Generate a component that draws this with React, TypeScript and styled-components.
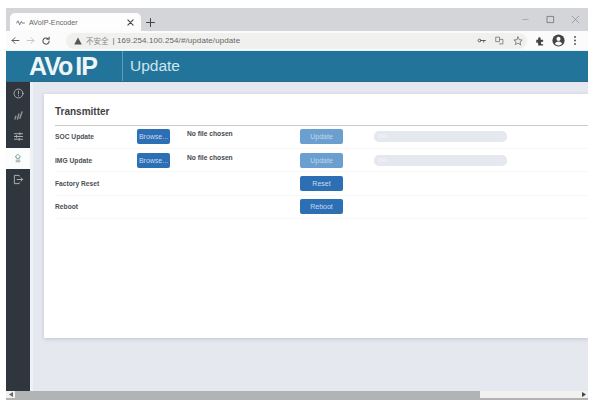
import * as React from "react";
import styled, { createGlobalStyle } from "styled-components";

const Global = createGlobalStyle`
  html, body {
    margin: 0;
    padding: 0;
    background: #fff;
    font-family: "Liberation Sans", Arial, sans-serif;
  }
  body { overflow: hidden; }
`;

const Page = styled.div`
  width: 602px;
  height: 402px;
  padding: 8px 14px 2px 6px;
  box-sizing: border-box;
`;

const Win = styled.div`
  width: 582px;
  height: 392px;
  display: flex;
  flex-direction: column;
  overflow: hidden;
`;

const TabStrip = styled.div`
  height: 23px;
  flex: none;
  background: #d3d5d9;
  display: flex;
  align-items: flex-end;
  padding-left: 4px;
`;

const Tab = styled.div`
  width: 131px;
  height: 18px;
  background: #fdfdfd;
  border-radius: 5px 5px 0 0;
  display: flex;
  align-items: center;
  padding: 0 7px 0 6px;
  box-sizing: border-box;
  font-size: 7.2px;
  color: #666;
  gap: 4px;
`;

const TabTitle = styled.span`
  flex: 1;
`;

const NewTab = styled.div`
  margin-left: 5px;
  height: 18px;
  display: flex;
  align-items: center;
`;

const WinControls = styled.div`
  margin-left: auto;
  height: 23px;
  display: flex;
  align-items: center;
  gap: 16px;
  padding-right: 8px;
`;

const AddressBar = styled.div`
  height: 20px;
  flex: none;
  background: #fbfbfb;
  display: flex;
  align-items: center;
  padding-left: 5px;
  border-bottom: 1px solid #e4f2f6;
  box-sizing: border-box;
`;

const NavIcons = styled.div`
  display: flex;
  align-items: center;
  gap: 6px;
  width: 55px;
  flex: none;
`;

const Omnibox = styled.div`
  width: 461px;
  flex: none;
  height: 16px;
  background: #f0f0ee;
  border-radius: 8px;
  display: flex;
  align-items: center;
  box-sizing: border-box;
  padding: 0 0 0 8px;
  font-size: 8px;
  color: #666;
  gap: 4px;
  margin-right: 8px;
`;

const Insecure = styled.span`
  font-family: "Noto Sans CJK SC", "Liberation Sans", sans-serif;
  font-size: 7.5px;
  color: #888;
`;

const Url = styled.span`
  letter-spacing: 0.1px;
  color: #666;
`;

const OmniRight = styled.div`
  margin-left: auto;
  display: flex;
  align-items: center;
  gap: 9px;
  padding-right: 4px;
`;

const ChromeRight = styled.div`
  display: flex;
  align-items: center;
  gap: 7px;
`;

const Header = styled.header`
  height: 31px;
  flex: none;
  background: #23749a;
  border-bottom: 1px solid #2a6a84;
  box-sizing: border-box;
  display: flex;
  align-items: center;
`;

const Logo = styled.div`
  width: 117px;
  height: 100%;
  box-sizing: border-box;
  padding-left: 23px;
  display: flex;
  align-items: center;
  font-size: 25px;
  font-weight: bold;
  letter-spacing: -1px;
  color: #eef6f8;
  border-right: 1px solid #5e9cb8;
`;

const LogoTail = styled.span`
  margin-left: 3px;
`;

const PageTitle = styled.div`
  padding-left: 7px;
  font-size: 15.5px;
  color: #cfe6ee;
`;

const Body = styled.div`
  flex: 1;
  min-height: 0;
  display: flex;
  background: #e6e8f0;
`;

const Sidebar = styled.nav`
  width: 24px;
  flex: none;
  background: #2f363d;
  display: flex;
  flex-direction: column;
`;

const SideItem = styled.div<{ $active?: boolean }>`
  height: 21.5px;
  display: flex;
  align-items: center;
  justify-content: center;
  background: ${(p) => (p.$active ? "#fbfdfc" : "transparent")};
`;

const SideTop = styled.div`
  height: 1px;
`;

const Main = styled.main`
  flex: 1;
  min-width: 0;
  padding: 12px 0 0 11px;
  border-left: 3px solid #eef1f7;
`;

const Card = styled.section`
  background: #fff;
  height: 244px;
  box-shadow: 0 1px 4px rgba(120, 125, 140, 0.35);
  padding: 0 0 0 11px;
  box-sizing: border-box;
`;

const CardTitle = styled.h2`
  margin: 0;
  height: 31.5px;
  line-height: 35px;
  box-sizing: border-box;
  font-size: 10px;
  font-weight: bold;
  color: #3f4247;
  border-bottom: 1px solid #c9c9c9;
`;

const Row = styled.div`
  height: 23.4px;
  display: grid;
  grid-template-columns: 82px 50px 113px 74px 133px;
  align-items: center;
  border-bottom: 1px solid #f7f7f7;
  box-sizing: border-box;
`;

const Label = styled.span`
  font-size: 6.7px;
  font-weight: bold;
  color: #4c4f54;
`;

const FileName = styled.span`
  font-size: 6.7px;
  font-weight: bold;
  color: #45484d;
  margin-top: -6px;
`;

const Btn = styled.button<{ $w: number; $disabled?: boolean }>`
  width: ${(p) => p.$w}px;
  height: 15px;
  padding: 0;
  border: 0;
  border-radius: 2px;
  background: ${(p) => (p.$disabled ? "#6a9fd0" : "#2c6fb5")};
  color: ${(p) => (p.$disabled ? "#c4d9ec" : "#c8daec")};
  font-family: "Liberation Sans", Arial, sans-serif;
  font-size: 7px;
  text-align: center;
`;

const Progress = styled.div`
  width: 133px;
  height: 11px;
  border-radius: 5px;
  background: #e6e8ef;
  font-size: 6px;
  line-height: 11px;
  padding-left: 4px;
  box-sizing: border-box;
  color: #f5f6f8;
`;

const Scrollbar = styled.div`
  height: 9px;
  flex: none;
  background: #f1f1ef;
  border-bottom: 2px solid #b2b3b5;
  box-sizing: border-box;
  display: flex;
  align-items: stretch;
`;

const ScrollArrow = styled.div`
  width: 9px;
  display: flex;
  justify-content: center;
  align-items: center;
  flex: none;
`;

const Thumb = styled.div`
  width: 465px;
  margin-bottom: -2px;
  background: #b2b3b5;
`;

const ArrowEnd = styled(ScrollArrow)`
  margin-left: auto;
  margin-right: 0;
`;

const Ico = ({ children, size = 10, color = "#555", sw = 1.5 }: any) => (
  <svg width={size} height={size} viewBox="0 0 16 16" fill="none" stroke={color} strokeWidth={sw} strokeLinecap="round" strokeLinejoin="round">
    {children}
  </svg>
);

const rows = [
  { label: "SOC Update", file: true },
  { label: "IMG Update", file: true },
  { label: "Factory Reset", action: "Reset" },
  { label: "Reboot", action: "Reboot" },
];

export default function App() {
  return (
    <Page>
      <Global />
      <Win>
        <TabStrip>
          <Tab>
            <Ico size={9} color="#667">
              <path d="M1 9l2.500-4 3 7 3-6 1.500 3H15" />
            </Ico>
            <TabTitle>AVoIP-Encoder</TabTitle>
            <Ico size={7} color="#444" sw={2.4}>
              <path d="M2 2l12 12M14 2L2 14" />
            </Ico>
          </Tab>
          <NewTab>
            <Ico size={9} color="#444" sw={1.8}>
              <path d="M8 1v14M1 8h14" />
            </Ico>
          </NewTab>
          <WinControls>
            <Ico size={9} color="#999" sw={1.2}>
              <path d="M3 8h10" />
            </Ico>
            <Ico size={9} color="#666" sw={1.3}>
              <rect x="2.500" y="2.500" width="11" height="11" />
            </Ico>
            <Ico size={9} color="#888" sw={1.2}>
              <path d="M2 2l12 12M14 2L2 14" />
            </Ico>
          </WinControls>
        </TabStrip>
        <AddressBar>
          <NavIcons>
            <Ico size={9} color="#555" sw={1.7}>
              <path d="M14 8H2M7 3L2 8l5 5" />
            </Ico>
            <Ico size={9} color="#bbb" sw={1.5}>
              <path d="M2 8h12M9 3l5 5-5 5" />
            </Ico>
            <Ico size={10} color="#555" sw={1.7}>
              <path d="M13 8a5 5 0 1 1-1.500-3.500M13 1.500V5H9.500" />
            </Ico>
          </NavIcons>
          <Omnibox>
            <svg width="8" height="8" viewBox="0 0 16 16">
              <path d="M8 1l7.500 14H.5z" fill="#555" />
            </svg>
            <Insecure>不安全</Insecure>
            <Url>| 169.254.100.254/#/update/update</Url>
            <OmniRight>
              <Ico size={9} color="#555" sw={1.6}>
                <circle cx="4.500" cy="8" r="2.500" />
                <path d="M7 8h8M12 8v3" />
              </Ico>
              <Ico size={9} color="#666" sw={1.3}>
                <path d="M2 2h6v8H2zM9 6h5v8H8" />
              </Ico>
              <Ico size={10} color="#666" sw={1.2}>
                <path d="M8 1.500l2 4.400 4.700.5-3.500 3.200 1 4.700L8 11.400l-4.200 2.400 1-4.700L1.300 6.400 6 5.900z" />
              </Ico>
            </OmniRight>
          </Omnibox>
          <ChromeRight>
            <svg width="10" height="10" viewBox="0 0 16 16">
              <path d="M2 6h3V4a2 2 0 0 1 4 0v2h4v3h-1.500a2 2 0 0 0 0 4H13v2H5v-2.500a2 2 0 0 0-3-1.500z" fill="#444" />
            </svg>
            <svg width="13" height="13" viewBox="0 0 16 16">
              <circle cx="8" cy="8" r="7.500" fill="#444" />
              <circle cx="8" cy="6" r="2.500" fill="#fbfbfb" />
              <path d="M3.500 12c1-2 2.700-2.800 4.500-2.800s3.500.8 4.500 2.800a6 6 0 0 1-9 0z" fill="#fbfbfb" />
            </svg>
            <svg width="6" height="11" viewBox="0 0 6 16">
              <circle cx="3" cy="3" r="1.400" fill="#555" />
              <circle cx="3" cy="8" r="1.400" fill="#555" />
              <circle cx="3" cy="13" r="1.400" fill="#555" />
            </svg>
          </ChromeRight>
        </AddressBar>
        <Header>
          <Logo>
            AVo<LogoTail>IP</LogoTail>
          </Logo>
          <PageTitle>Update</PageTitle>
        </Header>
        <Body>
          <Sidebar>
            <SideTop />
            <SideItem>
              <Ico size={11} color="#b9bdc0" sw={1.2}>
                <circle cx="8" cy="8" r="6.500" />
                <path d="M8 4.500v4M8 11v.5" />
              </Ico>
            </SideItem>
            <SideItem>
              <Ico size={11} color="#8b9094" sw={2.2}>
                <path d="M3 13l1-4M6.500 13l2-7M10 12l3-9" />
              </Ico>
            </SideItem>
            <SideItem>
              <Ico size={11} color="#aeb2b5" sw={1.4}>
                <path d="M2 4h12M2 8h12M2 12h12M10 2.500v3M5 6.500v3M9 10.500v3" />
              </Ico>
            </SideItem>
            <SideItem $active>
              <Ico size={10} color="#6f8f88" sw={1.2}>
                <path d="M8 2l4 4.500H10V9H6V6.500H4zM5 11.500h6M5 14h6" />
              </Ico>
            </SideItem>
            <SideItem>
              <Ico size={11} color="#b9bdc0" sw={1.3}>
                <path d="M9 3V2H2v12h7v-1M6 8h8M11.500 5.500L14 8l-2.500 2.500" />
              </Ico>
            </SideItem>
          </Sidebar>
          <Main>
            <Card>
              <CardTitle>Transmitter</CardTitle>
              {rows.map((r) => (
                <Row key={r.label}>
                  <Label>{r.label}</Label>
                  {r.file ? <Btn $w={33}>Browse...</Btn> : <span />}
                  {r.file ? <FileName>No file chosen</FileName> : <span />}
                  {r.file ? (
                    <Btn $w={43} $disabled>
                      Update
                    </Btn>
                  ) : (
                    <Btn $w={43}>{r.action}</Btn>
                  )}
                  {r.file ? <Progress>0%</Progress> : <span />}
                </Row>
              ))}
            </Card>
          </Main>
        </Body>
        <Scrollbar>
          <ScrollArrow>
            <svg width="4" height="5" viewBox="0 0 4 5">
              <path d="M4 0v5L0 2.500z" fill="#666" />
            </svg>
          </ScrollArrow>
          <Thumb />
          <ArrowEnd>
            <svg width="4" height="5" viewBox="0 0 4 5">
              <path d="M0 0v5l4-2.500z" fill="#444" />
            </svg>
          </ArrowEnd>
        </Scrollbar>
      </Win>
    </Page>
  );
}
